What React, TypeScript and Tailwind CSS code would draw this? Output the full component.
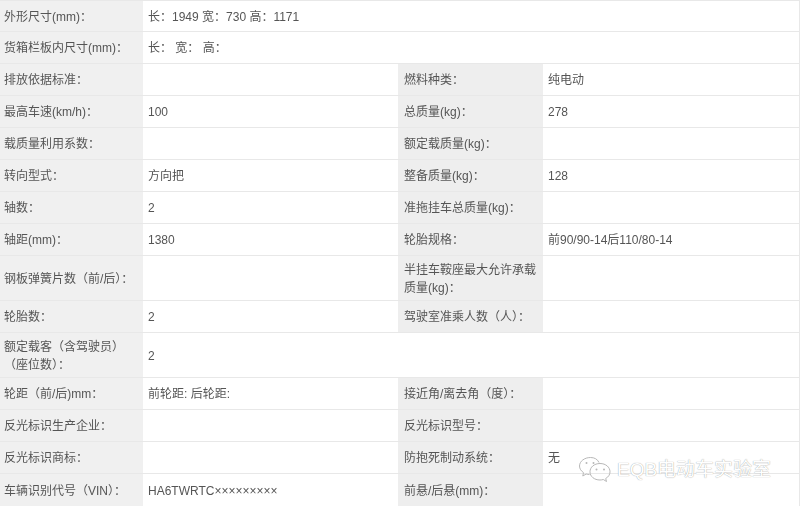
import React from 'react';

type Row = {
  label: React.ReactNode;
  value?: string;
  label2?: React.ReactNode;
  value2?: string;
  height: string;
};

const rows: Row[] = [
  { label: '外形尺寸(mm)：', value: '长：1949 宽：730 高：1171', height: 'h-8' },
  { label: '货箱栏板内尺寸(mm)：', value: '长： 宽： 高：', height: 'h-8' },
  { label: '排放依据标准：', label2: '燃料种类：', value2: '纯电动', height: 'h-8' },
  { label: '最高车速(km/h)：', value: '100', label2: '总质量(kg)：', value2: '278', height: 'h-8' },
  { label: '载质量利用系数：', label2: '额定载质量(kg)：', height: 'h-8' },
  { label: '转向型式：', value: '方向把', label2: '整备质量(kg)：', value2: '128', height: 'h-8' },
  { label: '轴数：', value: '2', label2: '准拖挂车总质量(kg)：', height: 'h-8' },
  { label: '轴距(mm)：', value: '1380', label2: '轮胎规格：', value2: '前90/90-14后110/80-14', height: 'h-8' },
  {
    label: '钢板弹簧片数（前/后）：',
    label2: (
      <>
        半挂车鞍座最大允许承载
        <br />
        质量(kg)：
      </>
    ),
    height: 'h-[45px]',
  },
  { label: '轮胎数：', value: '2', label2: '驾驶室准乘人数（人）：', height: 'h-8' },
  {
    label: (
      <>
        额定载客（含驾驶员）
        <br />
        （座位数）：
      </>
    ),
    value: '2',
    height: 'h-[45px]',
  },
  { label: '轮距（前/后)mm：', value: '前轮距: 后轮距:', label2: '接近角/离去角（度）：', height: 'h-8' },
  { label: '反光标识生产企业：', label2: '反光标识型号：', height: 'h-8' },
  { label: '反光标识商标：', label2: '防抱死制动系统：', value2: '无', height: 'h-8' },
  { label: '车辆识别代号（VIN）：', value: 'HA6TWRTC×××××××××', label2: '前悬/后悬(mm)：', height: 'h-8' },
];

const fullWidth = new Set([0, 1, 10]);

export default function App() {
  return (
    <div
      className="relative w-[800px] h-[506px] overflow-hidden bg-white text-[12px] leading-[18px] text-[#555]"
      style={{ fontFamily: '"Liberation Sans", "Noto Sans CJK SC", sans-serif' }}
    >
      <div className="blur-[0.35px]">
        {rows.map((row, i) => (
          <div
            key={i}
            className={`flex ${row.height} border-b border-r border-[#e8e8e8] first:border-t last:border-b-0`}
          >
            <div className="flex w-[143px] shrink-0 items-center bg-[#f0f0f0] pl-1 pt-px">
              <span>{row.label}</span>
            </div>
            <div className="flex flex-1 items-center whitespace-pre pl-[5px] pt-px">{row.value}</div>
            {!fullWidth.has(i) && (
              <>
                <div className="flex w-[145px] shrink-0 items-center bg-[#eeeeee] pl-[6px] pt-px">
                  <span>{row.label2}</span>
                </div>
                <div className="flex w-[256px] shrink-0 items-center pl-[5px] pt-px">{row.value2}</div>
              </>
            )}
          </div>
        ))}
      </div>

      {/* watermark */}
      <div className="absolute left-[578px] top-[456px] flex items-center gap-[5px]">
        <svg width="34" height="28" viewBox="0 0 34 28" fill="none" stroke="#b8b8b8" strokeWidth="1">
          <path d="M21 6.5C19.5 3.2 16.5 1.5 12.5 1.5 6.5 1.5 1.5 5.3 1.5 10c0 2.7 1.6 5 4 6.6L4.8 20l3.4-2c1 .3 2.3.5 3.3.5" />
          <path d="M22 7.5c-5.8 0-10 3.7-10 8.3s4.2 8.2 10 8.2c1.2 0 2.3-.2 3.3-.5l3.2 2-.8-3c2.8-1.6 4.3-4 4.3-6.7 0-4.6-4.2-8.3-10-8.3z" />
          <circle cx="8.5" cy="7" r="1" fill="#b8b8b8" stroke="none" />
          <circle cx="15.5" cy="7" r="1" fill="#b8b8b8" stroke="none" />
          <circle cx="18.5" cy="13.5" r="1" fill="#b8b8b8" stroke="none" />
          <circle cx="26" cy="13.5" r="1" fill="#b8b8b8" stroke="none" />
        </svg>
        <span className="text-[19px] leading-[24px] text-white [text-shadow:0_0_1px_#8a8a8a]">EQB电动车实验室</span>
      </div>
    </div>
  );
}
